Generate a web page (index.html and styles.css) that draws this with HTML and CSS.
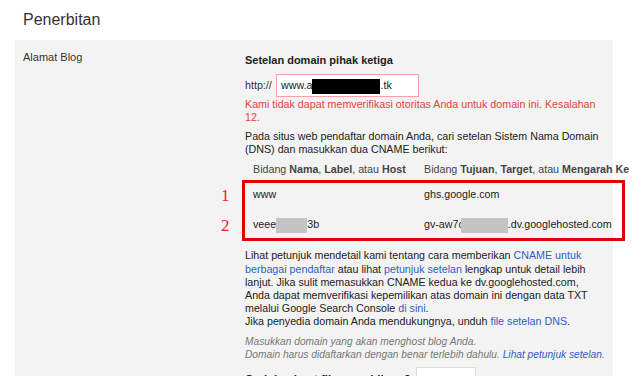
FILE: index.html
```html
<!DOCTYPE html>
<html lang="id">
<head>
    <meta charset="UTF-8">
    <title>Penerbitan</title>
    <link rel="stylesheet" href="styles.css">
</head>
<body>
<h1 class="page-title">Penerbitan</h1>
<div class="panel">
    <div class="label">Alamat Blog</div>
    <div class="content">
        <h2 class="section-title">Setelan domain pihak ketiga</h2>
        <div class="url-row">
            <span class="prefix">http://</span>
            <div class="url-input">www.a<span class="mask-black"></span>.tk</div>
        </div>
        <p class="error">Kami tidak dapat memverifikasi otoritas Anda untuk domain ini. Kesalahan 12.</p>
        <p class="intro">Pada situs web pendaftar domain Anda, cari setelan Sistem Nama Domain (DNS) dan masukkan dua CNAME berikut:</p>

        <div class="dns">
            <div class="dns-head">
                <span>Bidang <b>Nama</b>, <b>Label</b>, atau <b>Host</b></span>
                <span>Bidang <b>Tujuan</b>, <b>Target</b>, atau <b>Mengarah Ke</b></span>
            </div>
            <div class="dns-box">
                <div class="dns-row">
                    <i class="mark">1</i>
                    <span>www</span>
                    <span>ghs.google.com</span>
                </div>
                <div class="dns-row">
                    <i class="mark">2</i>
                    <span>veee<span class="mask-grey mask-a"></span>3b</span>
                    <span>gv-aw7c<span class="mask-grey mask-b"></span>.dv.googlehosted.com</span>
                </div>
            </div>
        </div>

        <p class="help">Lihat petunjuk mendetail kami tentang cara memberikan <a href="#">CNAME untuk berbagai pendaftar</a> atau lihat <a href="#">petunjuk setelan</a> lengkap untuk detail lebih lanjut. Jika sulit memasukkan CNAME kedua ke dv.googlehosted.com, Anda dapat memverifikasi kepemilikan atas domain ini dengan data TXT melalui Google Search Console <a href="#">di sini</a>.<br>Jika penyedia domain Anda mendukungnya, unduh <a href="#">file setelan DNS</a>.</p>

        <p class="hint">Masukkan domain yang akan menghost blog Anda.<br>Domain harus didaftarkan dengan benar terlebih dahulu. <a href="#">Lihat petunjuk setelan</a>.</p>

        <div class="next-row">
            <b>Cari dan buat file yang hilang?</b>
            <div class="small-input"></div>
        </div>
    </div>
</div>
</body>
</html>
```

FILE: styles.css
```css
*{
    margin:0;
    padding:0;
}
body{
    background:#fff;
    font-family:"Liberation Sans", Arial, sans-serif;
    font-size:10.7px;
    line-height:13.2px;
    color:#222;
    overflow:hidden;
}
a{
    color:#2f5dc8;
    text-decoration:none;
}
.page-title{
    height:40px;
    line-height:40px;
    padding-left:23px;
    font-size:16px;
    font-weight:normal;
    color:#333;
}
.panel{
    margin-left:15px;
    width:598px;
    min-height:336px;
    background:#f3f3f3;
    display:flex;
}
.label{
    width:230px;
    padding:11px 0 0 8px;
    box-sizing:border-box;
    color:#333;
    font-size:11px;
}
.content{
    width:357px;
    flex:none;
    padding-top:14px;
}
.section-title{
    font-size:11px;
    font-weight:bold;
    color:#222;
}
.url-row{
    margin-top:7px;
    display:flex;
    align-items:center;
}
.prefix{
    width:31px;
    color:#333;
}
.url-input{
    width:137px;
    height:21px;
    line-height:21px;
    border:1px solid #f2a3a3;
    background:#fff;
    padding-left:4px;
}
.mask-black{
    display:inline-block;
    width:68px;
    height:15px;
    background:#000;
    vertical-align:middle;
}
.error{
    margin-top:1px;
    color:#e8413c;
}
.intro{
    margin-top:5px;
}
.dns{
    margin-top:7px;
    width:383px;
    margin-left:-3px;
}
.dns-head,
.dns-row{
    display:grid;
    grid-template-columns:171px auto;
    white-space:nowrap;
}
.dns-head{
    padding-left:11px;
    color:#444;
}
.dns-box{
    margin-top:4px;
    border:3px solid #e00000;
}
.dns-row{
    position:relative;
    padding:5px 0 5px 8px;
}
.dns-row + .dns-row{
    margin-top:7px;
}
.mark{
    position:absolute;
    left:-24px;
    top:4px;
    font-family:"Liberation Serif", "Times New Roman", serif;
    font-style:normal;
    font-size:17px;
    line-height:17px;
    color:#ee1c24;
}
.mask-grey{
    display:inline-block;
    height:15px;
    background:#c4c4c4;
    vertical-align:middle;
}
.mask-a{
    width:31px;
}
.mask-b{
    width:47px;
    margin-left:-3px;
}
.help{
    margin-top:8px;
}
.hint{
    margin-top:6px;
    font-style:italic;
    font-size:10.2px;
    color:#777;
    white-space:nowrap;
}
.next-row{
    margin-top:6px;
    display:flex;
    align-items:flex-start;
}
.next-row b{
    margin-top:6px;
    font-size:11.4px;
}
.small-input{
    margin-left:5px;
    width:58px;
    height:22px;
    border:1px solid #ddd;
    background:#fff;
}
```
